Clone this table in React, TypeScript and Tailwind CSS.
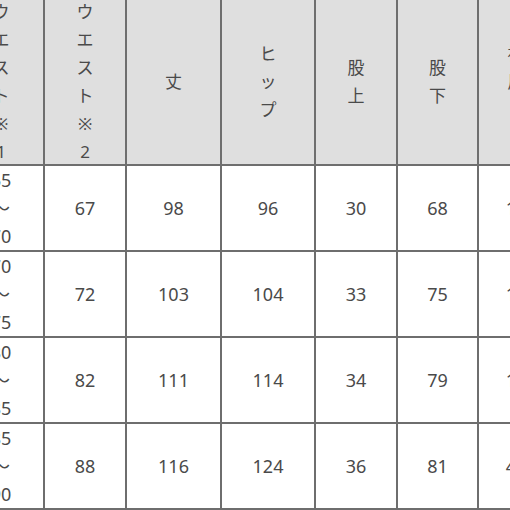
import React from "react";

const headers = ["ウエスト※1", "ウエスト※2", "丈", "ヒップ", "股上", "股下", "裾周り"];

const rows = [
  ["65〜70", "67", "98", "96", "30", "68", "18"],
  ["70〜75", "72", "103", "104", "33", "75", "19"],
  ["80〜85", "82", "111", "114", "34", "79", "19"],
  ["85〜90", "88", "116", "124", "36", "81", "41"],
];

const widths = ["w-[86px]", "w-[82px]", "w-[95px]", "w-[94px]", "w-[82px]", "w-[81px]", "w-[76px]"];

const App = () => {
  return (
    <div className="w-[510px] h-[510px] overflow-hidden bg-white">
      <table
        className="-ml-[43px] w-[516px] table-fixed border-collapse text-[#4a4a4a] text-[18px]"
        style={{ fontFamily: '"Noto Sans", "Noto Sans CJK JP", sans-serif' }}
      >
        <colgroup>
          {widths.map((w, i) => (
            <col key={i} className={w} />
          ))}
        </colgroup>
        <thead>
          <tr>
            {headers.map((h, i) => (
              <th
                key={i}
                className="border-2 border-t-0 border-[#6e6e6e] bg-[#dfdfdf] p-0 font-normal align-middle text-[17px]"
              >
                <div className="h-[164px] flex flex-col items-center justify-center leading-[28px]">
                  {Array.from(h).map((c, j) => (
                    <span key={j}>{c}</span>
                  ))}
                </div>
              </th>
            ))}
          </tr>
        </thead>
        <tbody>
          {rows.map((r, i) => (
            <tr key={i}>
              {r.map((v, j) => (
                <td
                  key={j}
                  className="h-[86px] border-2 border-[#6e6e6e] p-0 text-center align-middle"
                >
                  {j === 0 ? (
                    <div className="flex flex-col items-center leading-[28px]">
                      <span>{v.split("〜")[0]}</span>
                      <span>〜</span>
                      <span>{v.split("〜")[1]}</span>
                    </div>
                  ) : (
                    v
                  )}
                </td>
              ))}
            </tr>
          ))}
        </tbody>
      </table>
    </div>
  );
};

export default App;
